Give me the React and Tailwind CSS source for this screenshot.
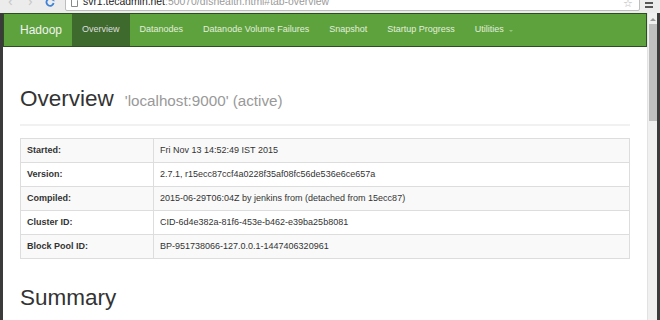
import React from "react";

const navItems = [
  { label: "Overview", active: true },
  { label: "Datanodes" },
  { label: "Datanode Volume Failures" },
  { label: "Snapshot" },
  { label: "Startup Progress" },
  { label: "Utilities", caret: true },
];

const rows = [
  ["Started:", "Fri Nov 13 14:52:49 IST 2015"],
  ["Version:", "2.7.1, r15ecc87ccf4a0228f35af08fc56de536e6ce657a"],
  ["Compiled:", "2015-06-29T06:04Z by jenkins from (detached from 15ecc87)"],
  ["Cluster ID:", "CID-6d4e382a-81f6-453e-b462-e39ba25b8081"],
  ["Block Pool ID:", "BP-951738066-127.0.0.1-1447406320961"],
];

const BrowserBar = () => (
  <div className="h-[13px] overflow-hidden bg-[#ececec] shrink-0">
    <div className="flex items-center h-[22px] mt-[-11px] pl-[8px]">
      {/* back / forward / reload */}
      <span className="text-[#c9c9c9] text-[15px] leading-none w-[20px]">‹</span>
      <span className="text-[#c9c9c9] text-[15px] leading-none w-[17px]">›</span>
      <svg width="10" height="10" viewBox="0 0 10 10" className="mt-[4px]">
        <path d="M8 3.2A3.6 3.6 0 1 0 8.6 6" fill="none" stroke="#3f82d9" strokeWidth="1.8" />
        <path d="M6 1.5L9.3 1.5L9.3 4.8Z" fill="#3f82d9" />
      </svg>
      <div className="ml-[10px] flex-1 h-[22px] bg-white border border-[#bdbdbd] rounded-[2px] flex items-center pl-[5px] pr-[6px] mr-[4px]">
        <svg width="7" height="9" viewBox="0 0 7 9" className="mt-[5px]">
          <path d="M0.5 0.5H4.5L6.5 2.5V8.5H0.5Z" fill="white" stroke="#8a8a8a" />
        </svg>
        <span className="ml-[5px] mt-[4px] text-[10.4px] leading-none whitespace-nowrap font-['Liberation_Sans',sans-serif]">
          <span className="text-[#222]">svr1.tecadmin.net</span>
          <span className="text-[#9a9a9a]">:50070/dfshealth.html#tab-overview</span>
        </span>
        <span className="ml-auto mt-[5px] text-[#b5b5b5] text-[11px] leading-none">☆</span>
      </div>
      <div className="w-[16px] flex flex-col gap-[2px] mt-[6px] pl-[1px]">
        <div className="w-[8px] h-[2px] bg-[#555]" />
        <div className="w-[8px] h-[2px] bg-[#555]" />
        <div className="w-[8px] h-[2px] bg-[#555]" />
      </div>
    </div>
  </div>
);

const Navbar = () => (
  <div className="h-[34px] bg-[#5ea23d] border border-[#2c4f1f] flex items-stretch font-['Liberation_Sans',sans-serif] shrink-0">
    <div className="pl-[16px] pr-[10px] flex items-center text-[12px] text-[#f2f2f2]">Hadoop</div>
    {navItems.map((item) => (
      <div
        key={item.label}
        className={`px-[10px] flex items-center text-[9px] ${
          item.active ? "bg-[#3e6a2e] text-[#dedede]" : "text-[#e3eedd]"
        }`}
      >
        {item.label}
        {item.caret && (
          <span className="ml-[5px] mt-[1px] w-0 h-0 border-t-[2px] border-t-[#94c47c] border-x-[2px] border-x-transparent" />
        )}
      </div>
    ))}
  </div>
);

const App = () => {
  return (
    <div className="w-[660px] h-[320px] overflow-hidden flex flex-col bg-[#ececec]">
      <BrowserBar />
      <div className="flex flex-1 min-h-0">
        <div className="w-[3px] bg-[#3b3b3b] shrink-0" />
        <div className="flex-1 bg-white flex flex-col min-w-0 font-['Liberation_Sans',sans-serif]">
          <Navbar />
          <div className="px-[17px]">
            <div className="mt-[39px] pb-[11px] border-b-2 border-[#f1f1f1] flex items-baseline whitespace-nowrap">
              <h1 className="text-[22.5px] leading-[25px] text-[#333]">Overview</h1>
              <span className="ml-[11px] text-[15.2px] text-[#999]">'localhost:9000' (active)</span>
            </div>

            <table className="mt-[12px] w-full border border-[#dddddd] border-collapse text-[9px] text-[#333]">
              <tbody>
                {rows.map(([label, value], i) => (
                  <tr key={label} className={`h-[24px] ${i % 2 === 0 ? "bg-[#f9f9f9]" : "bg-white"}`}>
                    <th className="w-[133px] text-left font-bold px-[6px] border border-[#dddddd]">{label}</th>
                    <td className="px-[6px] border border-[#dddddd]">{value}</td>
                  </tr>
                ))}
              </tbody>
            </table>

            <h1 className="mt-[26px] text-[22.5px] leading-[25px] text-[#333]">Summary</h1>
          </div>
        </div>
        {/* scrollbar */}
        <div className="w-[10px] bg-[#f0f0f0] border-l border-[#e2e2e2] shrink-0 flex flex-col items-center">
          <span className="mt-[5px] w-0 h-0 border-b-[3px] border-b-[#9a9a9a] border-x-[3px] border-x-transparent" />
          <div className="mt-[3px] w-[8px] h-[97px] bg-[#bfbfbf]" />
        </div>
        <div className="w-[3px] bg-[#3b3b3b] shrink-0" />
      </div>
    </div>
  );
};

export default App;
